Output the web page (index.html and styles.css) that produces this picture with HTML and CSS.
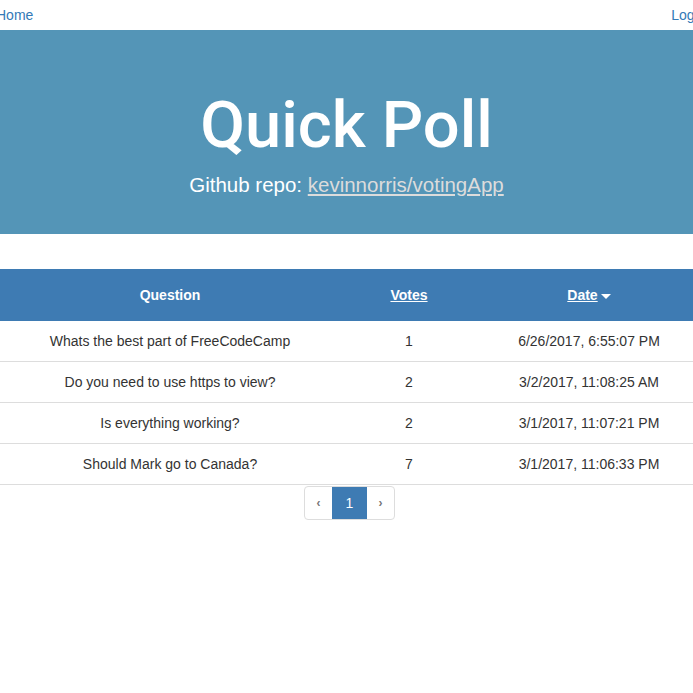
FILE: index.html
```html
<!DOCTYPE html>
<html>
<head>
<meta charset="utf-8">
<link rel="stylesheet" href="styles.css">
</head>
<body>
<nav class="nav">
  <a class="nav-link" href="#">Home</a>
  <a class="nav-link" href="#">Logout</a>
</nav>
<header class="jumbo">
  <h1 class="title">Quick Poll</h1>
  <p class="sub">Github repo: <a class="repo" href="#">kevinnorris/votingApp</a></p>
</header>
<main class="content">
  <table class="polls">
    <thead>
      <tr>
        <th class="c-q">Question</th>
        <th class="c-v"><a href="#" class="th-link">Votes</a></th>
        <th class="c-d"><a href="#" class="th-link">Date<span class="caret"></span></a></th>
      </tr>
    </thead>
    <tbody>
      <tr><td>Whats the best part of FreeCodeCamp</td><td>1</td><td>6/26/2017, 6:55:07 PM</td></tr>
      <tr><td>Do you need to use https to view?</td><td>2</td><td>3/2/2017, 11:08:25 AM</td></tr>
      <tr><td>Is everything working?</td><td>2</td><td>3/1/2017, 11:07:21 PM</td></tr>
      <tr><td>Should Mark go to Canada?</td><td>7</td><td>3/1/2017, 11:06:33 PM</td></tr>
    </tbody>
  </table>
  <div class="pager-wrap">
    <ul class="pager">
      <li class="pg pg-arrow">‹</li>
      <li class="pg pg-active">1</li>
      <li class="pg pg-arrow">›</li>
    </ul>
  </div>
</main>
</body>
</html>
```
FILE: styles.css
```css
html, body {
  margin: 0;
  padding: 0;
  overflow: hidden;
  width: 693px;
  height: 693px;
  background: #fff;
}
body {
  font-family: "Liberation Sans", Arial, sans-serif;
  font-size: 14px;
  line-height: 20px;
  color: #333;
}
.nav {
  height: 30px;
  display: flex;
  justify-content: space-between;
  align-items: center;
  margin-left: -4px;
  margin-right: -21px;
}
.nav-link {
  color: #337ab7;
  text-decoration: none;
  font-size: 14px;
}
.jumbo {
  background: #5495b7;
  color: #fff;
  text-align: center;
  height: 204px;
  box-sizing: border-box;
  padding-top: 60px;
}
.title {
  margin: 0;
  font-family: Roboto, "Liberation Sans", sans-serif;
  font-size: 65px;
  line-height: 70px;
  font-weight: 500;
}
.sub {
  margin: 10px 0 0;
  font-size: 20.5px;
  line-height: 30px;
}
.repo {
  color: #dcdcdc;
  text-decoration: underline;
}
.content {
  padding-top: 35px;
}
.polls {
  width: 700px;
  border-collapse: collapse;
  table-layout: fixed;
  margin-left: 0;
}
.c-q { width: 340px; }
.c-v { width: 138px; }
.polls th {
  background: #3e7bb3;
  color: #fff;
  font-weight: bold;
  height: 52px;
  padding: 0;
  text-align: center;
}
.th-link {
  color: #fff;
  text-decoration: underline;
}
.caret {
  display: inline-block;
  width: 0;
  height: 0;
  margin-left: 3px;
  vertical-align: middle;
  border-top: 5px solid #fff;
  border-left: 5px solid transparent;
  border-right: 5px solid transparent;
}
.polls td {
  text-align: center;
  padding: 10px 0;
  height: 20px;
  border-bottom: 1px solid #ddd;
}
.pager-wrap {
  display: flex;
  justify-content: center;
  padding-left: 6px;
}
.pager {
  list-style: none;
  margin: 1px 0 0;
  padding: 0;
  display: flex;
  border: 1px solid #ddd;
  border-radius: 4px;
  overflow: hidden;
  height: 32px;
}
.pg {
  display: flex;
  align-items: center;
  justify-content: center;
  color: #777;
  font-size: 12px;
  font-weight: bold;
}
.pg-arrow {
  width: 27px;
}
.pg-active {
  width: 35px;
  background: #3e7bb3;
  color: #fff;
  font-size: 14px;
  font-weight: normal;
}
```
